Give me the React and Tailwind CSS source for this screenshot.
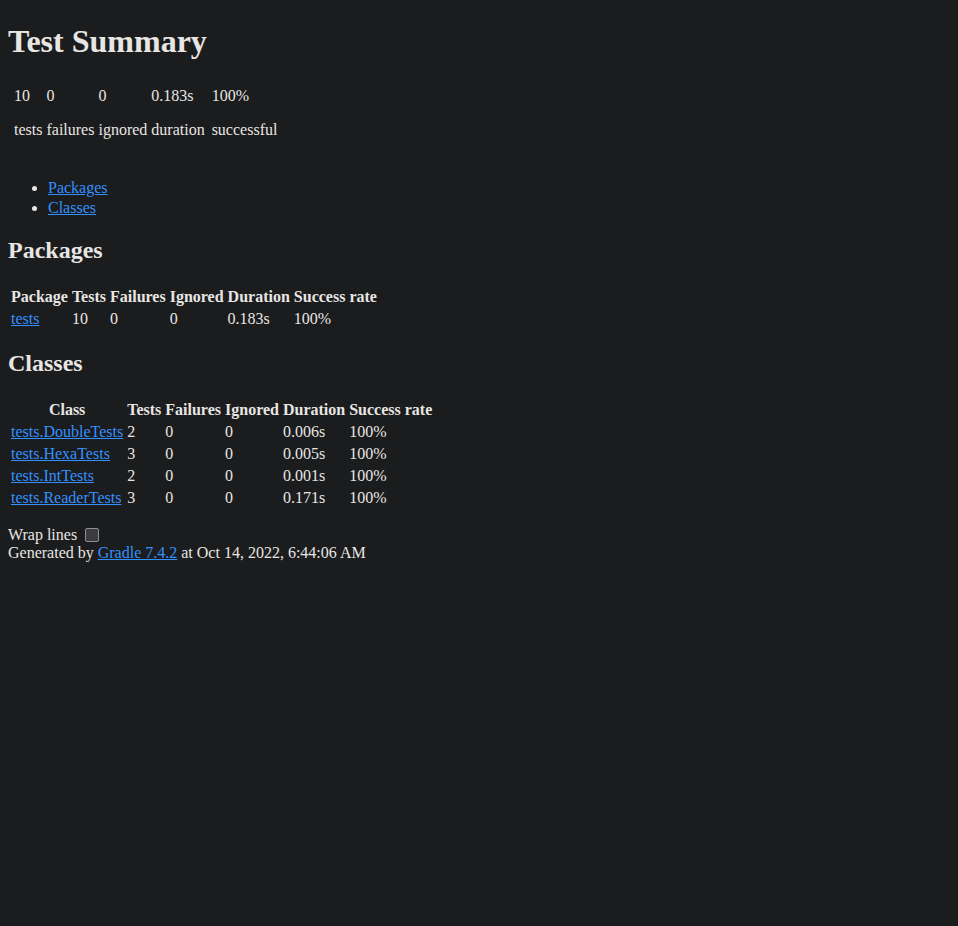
const packages = [
  { name: 'tests', tests: 10, failures: 0, ignored: 0, duration: '0.183s', rate: '100%' },
]

const classes = [
  { name: 'tests.DoubleTests', tests: 2, failures: 0, ignored: 0, duration: '0.006s', rate: '100%' },
  { name: 'tests.HexaTests', tests: 3, failures: 0, ignored: 0, duration: '0.005s', rate: '100%' },
  { name: 'tests.IntTests', tests: 2, failures: 0, ignored: 0, duration: '0.001s', rate: '100%' },
  { name: 'tests.ReaderTests', tests: 3, failures: 0, ignored: 0, duration: '0.171s', rate: '100%' },
]

const tableCls = 'border-separate border-spacing-[2px]'
const cell = 'p-[1px] text-left align-middle'
const headCell = 'p-[1px] text-center font-bold align-middle'
const link = 'text-[#3391ff] underline'

function InfoBox({ value, label }) {
  return (
    <td className={cell}>
      <div>
        <div>{value}</div>
        <p className="my-4">{label}</p>
      </div>
    </td>
  )
}

function ResultTable({ first, rows }) {
  return (
    <table className={tableCls}>
      <thead>
        <tr>
          <th className={headCell}>{first}</th>
          <th className={headCell}>Tests</th>
          <th className={headCell}>Failures</th>
          <th className={headCell}>Ignored</th>
          <th className={headCell}>Duration</th>
          <th className={headCell}>Success rate</th>
        </tr>
      </thead>
      <tbody>
        {rows.map((r) => (
          <tr key={r.name}>
            <td className={cell}>
              <a href="#" className={link}>{r.name}</a>
            </td>
            <td className={cell}>{r.tests}</td>
            <td className={cell}>{r.failures}</td>
            <td className={cell}>{r.ignored}</td>
            <td className={cell}>{r.duration}</td>
            <td className={cell}>{r.rate}</td>
          </tr>
        ))}
      </tbody>
    </table>
  )
}

export default function App() {
  return (
    <div className="min-h-screen bg-[#1b1c1e] px-2 pt-[22.5px] font-['Liberation_Serif','Times_New_Roman',serif] text-base leading-[normal] text-[#e8e6e3]">
      <h1 className="mb-[21.44px] text-[32px] font-bold">Test Summary</h1>
      <div>
        <table className={tableCls}>
          <tbody>
            <tr>
              <td className={cell}>
                <div>
                  <table className={tableCls}>
                    <tbody>
                      <tr>
                        <InfoBox value="10" label="tests" />
                        <InfoBox value="0" label="failures" />
                        <InfoBox value="0" label="ignored" />
                        <InfoBox value="0.183s" label="duration" />
                      </tr>
                    </tbody>
                  </table>
                </div>
              </td>
              <InfoBox value="100%" label="successful" />
            </tr>
          </tbody>
        </table>
      </div>
      <div>
        <ul className="mt-[17px] mb-0 list-disc pl-10">
          <li className="leading-[20px]">
            <a href="#" className={link}>Packages</a>
          </li>
          <li className="leading-[20px]">
            <a href="#" className={link}>Classes</a>
          </li>
        </ul>
        <div>
          <h2 className="mt-[16px] mb-[19px] text-2xl font-bold">Packages</h2>
          <ResultTable first="Package" rows={packages} />
        </div>
        <div>
          <h2 className="mt-[16px] mb-[19px] text-2xl font-bold">Classes</h2>
          <ResultTable first="Class" rows={classes} />
        </div>
      </div>
      <div className="mt-[16px]">
        <div className="h-[18px]">
          <label>
            Wrap lines
            <input
              type="checkbox"
              className="ml-2 inline-block h-[14px] w-[14px] appearance-none rounded-[2px] border border-[#8e8e95] bg-[#3b3b40] align-[-2px]"
            />
          </label>
        </div>
        Generated by{' '}
        <a href="#" className={link}>Gradle 7.4.2</a> at Oct 14, 2022, 6:44:06 AM
      </div>
    </div>
  )
}
